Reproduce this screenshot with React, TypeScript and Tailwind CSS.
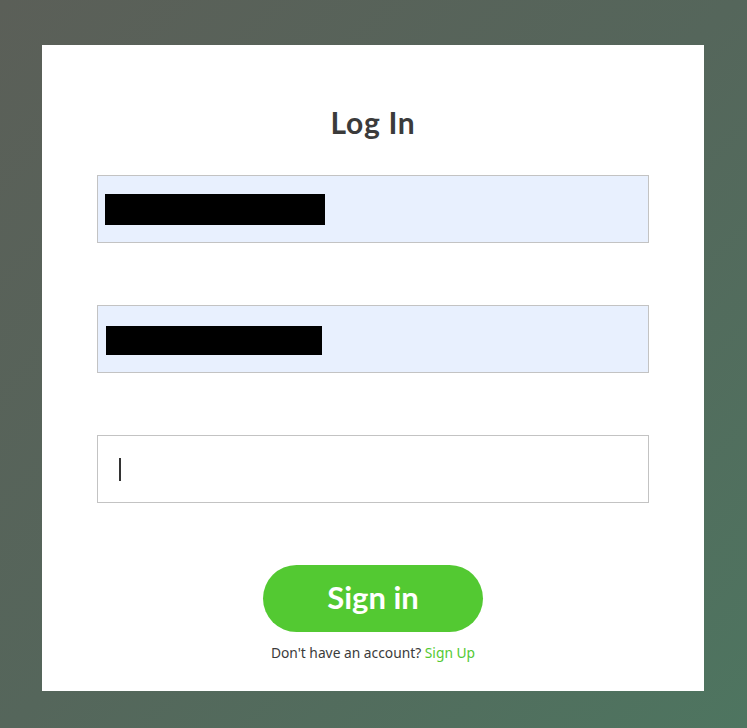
import React from "react";

export default function App() {
  return (
    <div className="w-[747px] h-[728px] bg-[linear-gradient(135deg,#5b5f58_0%,#55665b_50%,#4e7560_100%)] pt-[45px] pl-[42px]">
      <div className="w-[662px] h-[646px] bg-white flex flex-col items-center">
        <h1 className="shrink-0 mt-[59px] text-[30px] leading-[36px] font-bold tracking-[0.7px] text-[#3b3b3b] [font-family:Lato,'Liberation_Sans',sans-serif]">
          Log In
        </h1>
        <div className="shrink-0 mt-[35px] w-[552px] h-[68px] border border-[#c3c3c3] bg-[#e8f0fe] flex items-center pl-[7px]">
          <div className="w-[220px] h-[31px] bg-black" />
        </div>
        <div className="shrink-0 mt-[62px] w-[552px] h-[68px] border border-[#c3c3c3] bg-[#e8f0fe] flex items-center pl-[8px] pt-[2px]">
          <div className="w-[216px] h-[29px] bg-black" />
        </div>
        <div className="shrink-0 mt-[62px] w-[552px] h-[68px] border border-[#c3c3c3] bg-white flex items-center pl-[21px]">
          <div className="w-[2px] h-[23px] bg-[#333]" />
        </div>
        <button className="shrink-0 mt-[62px] w-[220px] h-[67px] rounded-full bg-[#53c932] text-white text-[31px] font-bold [font-family:Lato,'Liberation_Sans',sans-serif] flex items-center justify-center pb-[2px]">
          Sign in
        </button>
        <p className="shrink-0 mt-[12px] text-[13.8px] text-[#3b3b3b] [font-family:'Noto_Sans',sans-serif] leading-[18px]">
          Don't have an account? <span className="text-[#53c932]">Sign Up</span>
        </p>
      </div>
    </div>
  );
}
